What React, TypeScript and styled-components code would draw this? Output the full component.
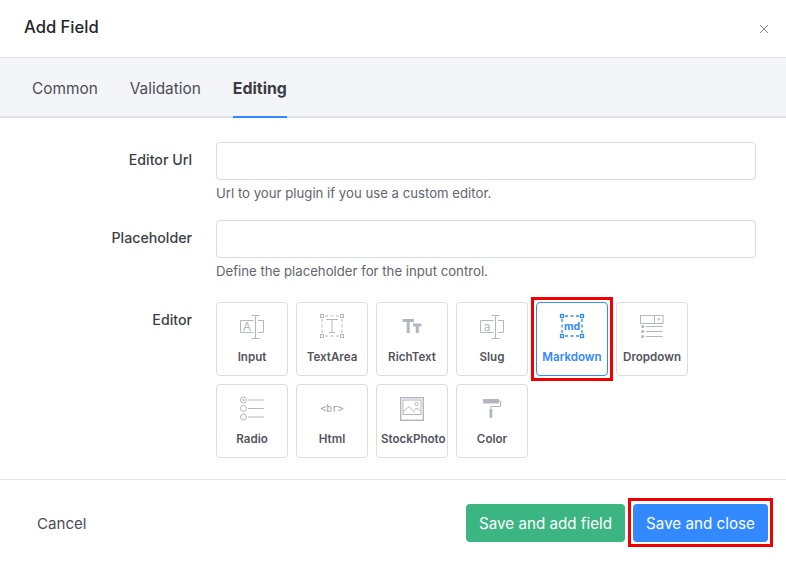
import React from "react";
import styled, { css, createGlobalStyle } from "styled-components";

const Global = createGlobalStyle`
  html, body { margin: 0; padding: 0; background: #fff; }
  body { font-family: Inter, "Liberation Sans", sans-serif; }
  * { box-sizing: border-box; }
`;

const redFrame = (inset: string) => css`
  position: relative;
  &::after {
    content: "";
    position: absolute;
    inset: ${inset};
    border: 3px solid #f00000;
    pointer-events: none;
  }
`;

const Dialog = styled.div`
  width: 786px;
  height: 563px;
  display: flex;
  flex-direction: column;
  overflow: hidden;
  background: #fff;
  color: #3d3f46;
`;
const Header = styled.header`
  height: 58px;
  flex: none;
  padding: 0 16px 3px 24px;
  display: flex;
  align-items: center;
  justify-content: space-between;
  border-bottom: 1px solid #e2e3e8;
`;
const Title = styled.h1`
  margin: 0;
  font-size: 16.6px;
  font-weight: 500;
  color: #24262b;
`;
const Close = styled.button`
  width: 12px;
  height: 12px;
  padding: 0;
  border: 0;
  background: none;
  display: flex;
  margin: 3px 0 0;
`;
const Tabs = styled.nav`
  height: 60px;
  flex: none;
  padding: 0 32px;
  display: flex;
  gap: 32px;
  background: #f4f5f9;
  border-bottom: 2px solid #dfe0e5;
`;
const Tab = styled.a<{ $active?: boolean }>`
  height: 60px;
  padding-top: 2px;
  display: flex;
  align-items: center;
  font-size: ${(p) => (p.$active ? "15.9px" : "15.4px")};
  font-weight: ${(p) => (p.$active ? 700 : 400)};
  color: ${(p) => (p.$active ? "#3b3d43" : "#4b4d54")};
  border-bottom: 2px solid ${(p) => (p.$active ? "#3389ff" : "transparent")};
`;
const Form = styled.main`
  flex: 1;
  padding: 24px 30px 0 0;
  display: flex;
  flex-direction: column;
`;
const Row = styled.div<{ $mb: number }>`
  display: grid;
  grid-template-columns: 192px 540px;
  column-gap: 24px;
  margin-bottom: ${(p) => p.$mb}px;
`;
const Label = styled.label`
  padding-top: 8px;
  text-align: right;
  font-size: 14.2px;
  font-weight: 500;
  line-height: 20px;
  color: #3d3f46;
`;
const Input = styled.input`
  display: block;
  width: 540px;
  height: 38px;
  border: 1px solid #d9dbe1;
  border-radius: 4px;
  background: #fff;
`;
const Hint = styled.div`
  margin-top: 5px;
  font-size: 13.2px;
  line-height: 17px;
  color: #63666e;
`;
const EditorGrid = styled.div`
  display: grid;
  grid-template-columns: repeat(6, 72px);
  grid-auto-rows: 74px;
  gap: 8px;
`;
const EditorCard = styled.div<{ $selected?: boolean }>`
  display: flex;
  flex-direction: column;
  align-items: center;
  border: 1px solid ${(p) => (p.$selected ? "#3389ff" : "#dcdde2")};
  border-radius: 4px;
  background: #fff;
  color: ${(p) => (p.$selected ? "#3389ff" : "#b4b6bf")};
  ${(p) => p.$selected && redFrame("-6px")}
`;
const IconBox = styled.div`
  height: 44px;
  flex: none;
  display: flex;
  align-items: center;
  justify-content: center;
  padding-top: 3px;
`;
const CardLabel = styled.span<{ $selected?: boolean }>`
  display: block;
  width: 100%;
  padding: 0 4px;
  text-align: center;
  font-size: 11.6px;
  font-weight: 600;
  line-height: 16px;
  margin-top: 2px;
  white-space: nowrap;
  color: ${(p) => (p.$selected ? "#3389ff" : "#53555e")};
`;
const Footer = styled.footer`
  height: 84px;
  flex: none;
  padding: 24px 18px 21px 37px;
  display: flex;
  align-items: center;
  justify-content: space-between;
  border-top: 1px solid #e2e3e8;
`;
const Cancel = styled.button`
  padding: 0;
  border: 0;
  background: none;
  font: 400 15.1px Inter, "Liberation Sans", sans-serif;
  color: #4b4d54;
`;
const Actions = styled.div`
  display: flex;
  gap: 8px;
`;
const Action = styled.button<{ $color: string; $w: number; $hl?: boolean }>`
  width: ${(p) => p.$w}px;
  height: 38px;
  padding: 0;
  border: 0;
  border-radius: 4px;
  background: ${(p) => p.$color};
  color: #fff;
  font: 400 15.2px Inter, "Liberation Sans", sans-serif;
  ${(p) => p.$hl && redFrame("-6px -5px -5px -5px")}
`;

const Svg = ({ children }: { children: React.ReactNode }) => (
  <svg width={32} height={30} viewBox="0 0 32 30" fill="none" stroke="currentColor" strokeWidth="1">
    {children}
  </svg>
);

const Handles = ({ sw = 1 }: { sw?: number }) => (
  <g strokeWidth={sw}>
    <rect x="4.5" y="2.5" width="3" height="3" />
    <rect x="24.5" y="2.5" width="3" height="3" />
    <rect x="4.5" y="22.5" width="3" height="3" />
    <rect x="24.5" y="22.5" width="3" height="3" />
    <path d="M9 4h14.5M9 24h14.5M6 7v14.5M26 7v14.5" strokeDasharray="3 2.5" />
  </g>
);

const CursorBox = ({ letter }: { letter: string }) => (
  <Svg>
    <path d="M17.5 8.5H4.5v12h13M22 8.5h5.5v12H22" />
    <path d="M15.5 3.5h8M19.5 3.5v23M15.5 26.5h8" />
    <text x="11" y="18.5" textAnchor="middle" fontSize="12" fontFamily="Inter, sans-serif" fill="currentColor" stroke="none">
      {letter}
    </text>
  </Svg>
);

const icons: Record<string, React.ReactNode> = {
  Input: <CursorBox letter="A" />,
  TextArea: (
    <Svg>
      <Handles />
      <path d="M10 7.5h12M16 7.5v13.5M13 20.5h6" />
    </Svg>
  ),
  RichText: (
    <Svg>
      <path d="M6.5 8.5h11.5M12.2 8v13M17 13h8.5M21.3 13v8" strokeWidth="3" />
    </Svg>
  ),
  Slug: <CursorBox letter="a" />,
  Markdown: (
    <Svg>
      <Handles sw={1.3} />
      <text x="16" y="17.5" textAnchor="middle" fontSize="10.5" fontWeight="700" fontFamily="Inter, sans-serif" fill="currentColor" stroke="none">
        md
      </text>
    </Svg>
  ),
  Dropdown: (
    <Svg>
      <rect x="4.5" y="3.5" width="22.5" height="8" />
      <path d="M18.5 3.5v8" />
      <path d="M21 6.5h3.5l-1.75 2.2z" fill="currentColor" stroke="none" />
      <circle cx="6.7" cy="14.5" r="1.6" fill="currentColor" stroke="none" />
      <circle cx="6.7" cy="19.5" r="1.6" fill="currentColor" stroke="none" />
      <circle cx="6.7" cy="24.5" r="1.6" fill="currentColor" stroke="none" />
      <path d="M10 14.5h16.7M10 19.5h16.7M10 24.5h16.7" />
    </Svg>
  ),
  Radio: (
    <Svg>
      <circle cx="7.5" cy="6" r="3" />
      <circle cx="7.5" cy="6" r="1" fill="currentColor" stroke="none" />
      <circle cx="7.5" cy="14.5" r="3" />
      <circle cx="7.5" cy="23" r="3" />
      <path d="M12 6h16M12 14.5h16M12 23h16" />
    </Svg>
  ),
  Html: (
    <Svg>
      <text x="16" y="18" textAnchor="middle" fontSize="9.6" fontFamily="'DejaVu Sans Mono', monospace" fill="#9a9ca5" stroke="none">
        {"<br>"}
      </text>
    </Svg>
  ),
  StockPhoto: (
    <Svg>
      <rect x="4.7" y="3.7" width="22.6" height="22.6" strokeWidth="1.4" />
      <rect x="7" y="6" width="18" height="14.5" />
      <path d="M7 18l6-5.5 6 6M18 16l3-2 4 3.5" />
      <circle cx="20.5" cy="10" r="1.6" />
    </Svg>
  ),
  Color: (
    <Svg>
      <path d="M7 5h16v4.5H7z" fill="currentColor" stroke="none" />
      <path d="M23 7h1.5v5.5h-9.6V15" />
      <rect x="13.5" y="15" width="2.8" height="9" rx="1" fill="currentColor" stroke="none" />
    </Svg>
  ),
};

const editors = ["Input", "TextArea", "RichText", "Slug", "Markdown", "Dropdown", "Radio", "Html", "StockPhoto", "Color"];

export default function App() {
  return (
    <Dialog>
      <Global />
      <Header>
        <Title>Add Field</Title>
        <Close aria-label="Close">
          <svg width="12" height="12" viewBox="0 0 12 12" stroke="#85878e" strokeWidth="1">
            <path d="M2 2l8 8M10 2l-8 8" />
          </svg>
        </Close>
      </Header>
      <Tabs>
        <Tab>Common</Tab>
        <Tab>Validation</Tab>
        <Tab $active>Editing</Tab>
      </Tabs>
      <Form>
        <Row $mb={18}>
          <Label>Editor Url</Label>
          <div>
            <Input />
            <Hint>Url to your plugin if you use a custom editor.</Hint>
          </div>
        </Row>
        <Row $mb={22}>
          <Label>Placeholder</Label>
          <div>
            <Input />
            <Hint>Define the placeholder for the input control.</Hint>
          </div>
        </Row>
        <Row $mb={0}>
          <Label>Editor</Label>
          <EditorGrid>
            {editors.map((name) => (
              <EditorCard key={name} $selected={name === "Markdown"}>
                <IconBox>{icons[name]}</IconBox>
                <CardLabel $selected={name === "Markdown"}>{name}</CardLabel>
              </EditorCard>
            ))}
          </EditorGrid>
        </Row>
      </Form>
      <Footer>
        <Cancel>Cancel</Cancel>
        <Actions>
          <Action $color="#3bb582" $w={159}>Save and add field</Action>
          <Action $color="#3389ff" $w={135} $hl>Save and close</Action>
        </Actions>
      </Footer>
    </Dialog>
  );
}
